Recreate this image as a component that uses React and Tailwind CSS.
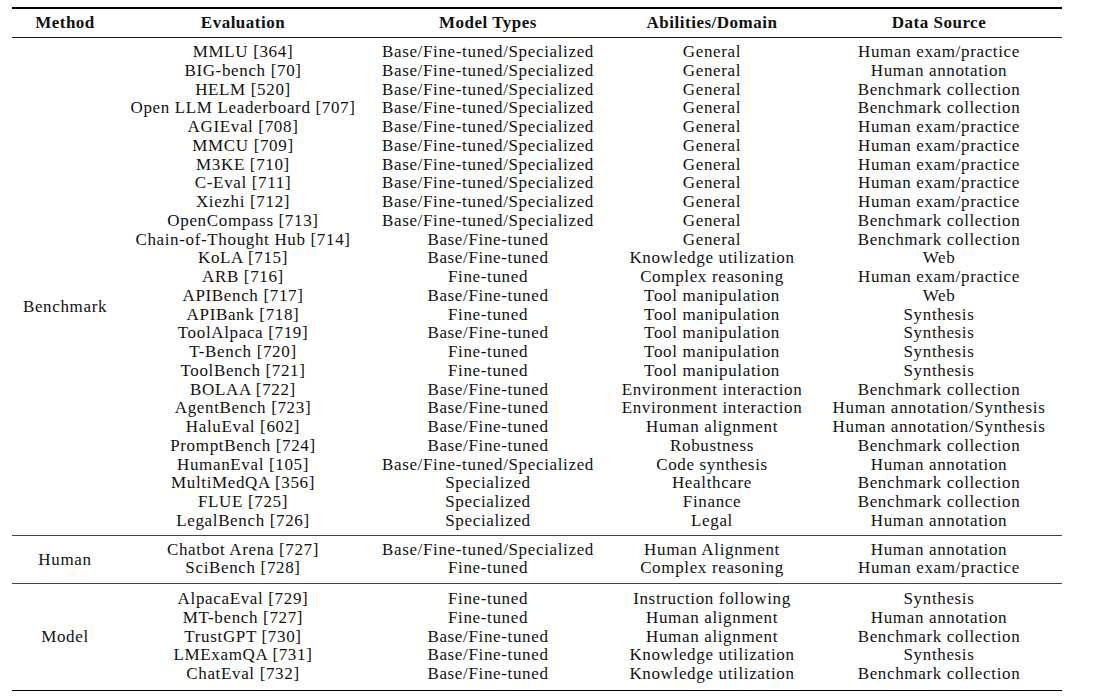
import React from "react";

const bench = [
  ["MMLU [364]", "Base/Fine-tuned/Specialized", "General", "Human exam/practice"],
  ["BIG-bench [70]", "Base/Fine-tuned/Specialized", "General", "Human annotation"],
  ["HELM [520]", "Base/Fine-tuned/Specialized", "General", "Benchmark collection"],
  ["Open LLM Leaderboard [707]", "Base/Fine-tuned/Specialized", "General", "Benchmark collection"],
  ["AGIEval [708]", "Base/Fine-tuned/Specialized", "General", "Human exam/practice"],
  ["MMCU [709]", "Base/Fine-tuned/Specialized", "General", "Human exam/practice"],
  ["M3KE [710]", "Base/Fine-tuned/Specialized", "General", "Human exam/practice"],
  ["C-Eval [711]", "Base/Fine-tuned/Specialized", "General", "Human exam/practice"],
  ["Xiezhi [712]", "Base/Fine-tuned/Specialized", "General", "Human exam/practice"],
  ["OpenCompass [713]", "Base/Fine-tuned/Specialized", "General", "Benchmark collection"],
  ["Chain-of-Thought Hub [714]", "Base/Fine-tuned", "General", "Benchmark collection"],
  ["KoLA [715]", "Base/Fine-tuned", "Knowledge utilization", "Web"],
  ["ARB [716]", "Fine-tuned", "Complex reasoning", "Human exam/practice"],
  ["APIBench [717]", "Base/Fine-tuned", "Tool manipulation", "Web"],
  ["APIBank [718]", "Fine-tuned", "Tool manipulation", "Synthesis"],
  ["ToolAlpaca [719]", "Base/Fine-tuned", "Tool manipulation", "Synthesis"],
  ["T-Bench [720]", "Fine-tuned", "Tool manipulation", "Synthesis"],
  ["ToolBench [721]", "Fine-tuned", "Tool manipulation", "Synthesis"],
  ["BOLAA [722]", "Base/Fine-tuned", "Environment interaction", "Benchmark collection"],
  ["AgentBench [723]", "Base/Fine-tuned", "Environment interaction", "Human annotation/Synthesis"],
  ["HaluEval [602]", "Base/Fine-tuned", "Human alignment", "Human annotation/Synthesis"],
  ["PromptBench [724]", "Base/Fine-tuned", "Robustness", "Benchmark collection"],
  ["HumanEval [105]", "Base/Fine-tuned/Specialized", "Code synthesis", "Human annotation"],
  ["MultiMedQA [356]", "Specialized", "Healthcare", "Benchmark collection"],
  ["FLUE [725]", "Specialized", "Finance", "Benchmark collection"],
  ["LegalBench [726]", "Specialized", "Legal", "Human annotation"],
];

const human = [
  ["Chatbot Arena [727]", "Base/Fine-tuned/Specialized", "Human Alignment", "Human annotation"],
  ["SciBench [728]", "Fine-tuned", "Complex reasoning", "Human exam/practice"],
];

const model = [
  ["AlpacaEval [729]", "Fine-tuned", "Instruction following", "Synthesis"],
  ["MT-bench [727]", "Fine-tuned", "Human alignment", "Human annotation"],
  ["TrustGPT [730]", "Base/Fine-tuned", "Human alignment", "Benchmark collection"],
  ["LMExamQA [731]", "Base/Fine-tuned", "Knowledge utilization", "Synthesis"],
  ["ChatEval [732]", "Base/Fine-tuned", "Knowledge utilization", "Benchmark collection"],
];

function Row({ r }) {
  return (
    <div className="grid grid-cols-[250px_240px_208px_246px] h-[18.76px] leading-[18.76px] text-center whitespace-nowrap">
      {r.map((c, i) => (
        <div key={i}>{c}</div>
      ))}
    </div>
  );
}

function Section({ label, rows, pt, pb, offset }) {
  return (
    <div className={`flex ${pt} ${pb}`}>
      <div className={`w-[106px] flex items-center justify-center ${offset}`}>{label}</div>
      <div className="flex flex-col">
        {rows.map((r, i) => (
          <Row key={i} r={r} />
        ))}
      </div>
    </div>
  );
}

export default function App() {
  return (
    <div
      className="bg-white w-[1093px] h-[697px] text-[#111] text-[17px] tracking-[0.65px]"
      style={{ fontFamily: '"Liberation Serif", serif' }}
    >
      <div className="pl-[12px] pt-[7px] w-[1062px]">
        <div className="h-[1.5px] bg-black" />
        <div className="grid grid-cols-[106px_250px_240px_208px_246px] h-[28.5px] items-center text-center font-bold text-[17px] tracking-[0.5px]">
          <div>Method</div>
          <div>Evaluation</div>
          <div>Model Types</div>
          <div>Abilities/Domain</div>
          <div>Data Source</div>
        </div>
        <div className="h-px bg-[#222]" />
        <Section label="Benchmark" rows={bench} pt="pt-[5px]" pb="pb-[4px]" offset="pt-[39px]" />
        <div className="h-px bg-[#444]" />
        <Section label="Human" rows={human} pt="pt-[5px]" pb="pb-[5px]" offset="" />
        <div className="h-px bg-[#444]" />
        <Section label="Model" rows={model} pt="pt-[6px]" pb="pb-[6px]" offset="" />
        <div className="h-[1.5px] bg-black" />
      </div>
    </div>
  );
}
